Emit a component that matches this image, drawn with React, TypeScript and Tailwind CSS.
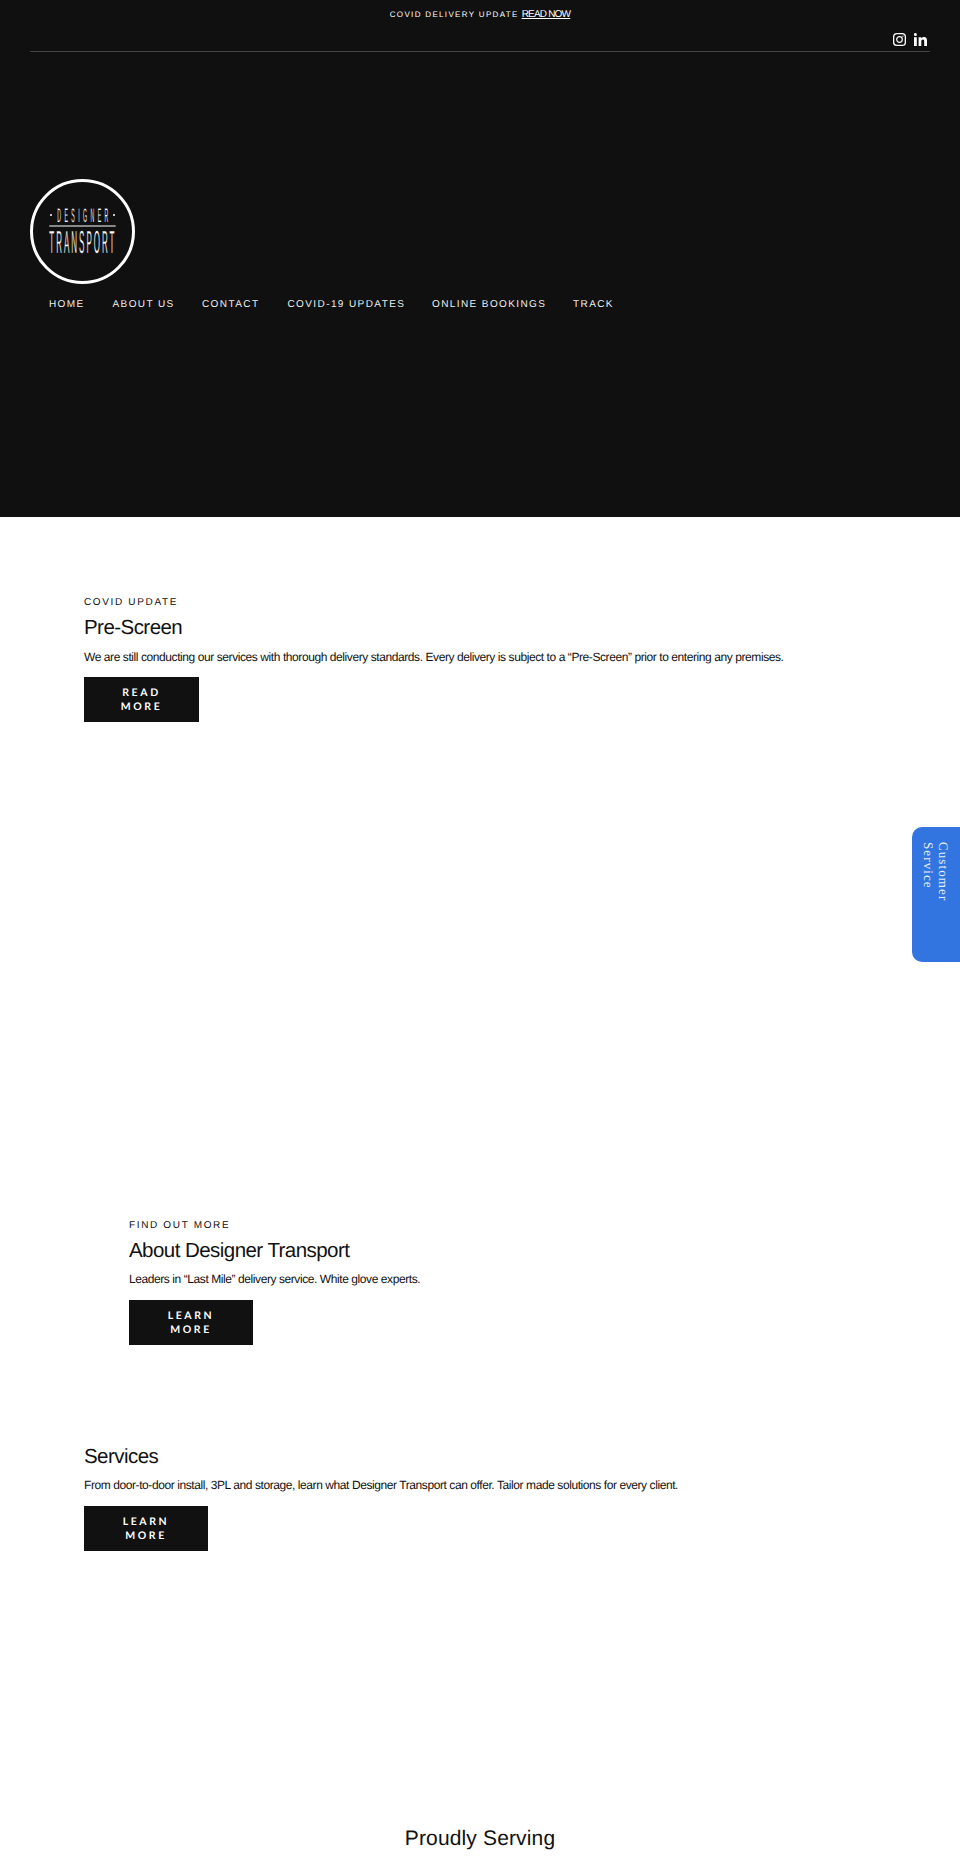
const sans = "font-['Liberation_Sans',Arial,sans-serif]"

const navItems = [
  { label: 'HOME', className: 'w-[63.5px]' },
  { label: 'ABOUT US', className: 'w-[89.5px]' },
  { label: 'CONTACT', className: 'w-[85.5px]' },
  { label: 'COVID-19 UPDATES', className: 'w-[144.5px]' },
  { label: 'ONLINE BOOKINGS', className: 'w-[141px]' },
  { label: 'TRACK', className: '' },
]

function Logo() {
  return (
    <svg width="105" height="105" viewBox="0 0 105 105" className="block">
      <circle cx="52.5" cy="52.5" r="51" fill="none" stroke="white" strokeWidth="3" />
      <circle cx="21" cy="36" r="1" fill="white" />
      <circle cx="84" cy="36" r="1" fill="white" />
      <text
        transform="translate(27.3 43) scale(0.264 1)"
        fill="white"
        stroke="#101010"
        strokeWidth="0.25"
        fontFamily="Liberation Sans, Arial, sans-serif"
        fontSize="19.5"
        letterSpacing="13"
      >
        DESIGNER
      </text>
      <rect x="19.3" y="46.5" width="66.4" height="1" fill="white" />
      <text
        transform="translate(19.3 74) scale(0.25 1)"
        fill="white"
        stroke="#101010"
        strokeWidth="0.4"
        fontFamily="Liberation Sans, Arial, sans-serif"
        fontSize="32"
        letterSpacing="8"
      >
        TRANSPORT
      </text>
    </svg>
  )
}

function InstagramIcon() {
  return (
    <svg width="13" height="13" viewBox="0 0 13 13" fill="none" stroke="white">
      <rect x="0.65" y="0.65" width="11.7" height="11.7" rx="3.2" strokeWidth="1.3" />
      <circle cx="6.5" cy="6.5" r="2.8" strokeWidth="1.2" />
      <circle cx="9.9" cy="3.1" r="0.7" fill="white" stroke="none" />
    </svg>
  )
}

function LinkedinIcon() {
  return (
    <svg width="13" height="13" viewBox="0 0 13 13" fill="white">
      <rect x="0" y="4.2" width="2.8" height="8.8" />
      <circle cx="1.4" cy="1.5" r="1.5" />
      <path d="M4.6 4.2h2.6v1.2c.5-.8 1.5-1.4 2.8-1.4 2.3 0 3 1.5 3 3.6V13h-2.8V8.2c0-1.1-.3-1.8-1.3-1.8-1.1 0-1.6.8-1.6 1.9V13H4.6z" />
    </svg>
  )
}

function DarkButton({ lines, className }: { lines: string[]; className: string }) {
  return (
    <a
      className={`flex h-[45px] flex-col items-center justify-center bg-[#111111] pt-[1px] font-['Lato',sans-serif] text-[10.5px] leading-[14px] font-bold tracking-[2.6px] text-white ${className}`}
    >
      {lines.map(line => (
        <span key={line}>{line}</span>
      ))}
    </a>
  )
}

function Eyebrow({ children }: { children: string }) {
  return <p className="h-[14px] text-[10px] leading-[16px] tracking-[1.65px] text-[#111111]">{children}</p>
}

function Heading({ children }: { children: string }) {
  return <h2 className="h-[36px] text-[20.5px] leading-[38px] tracking-[-0.55px] text-[#111111]">{children}</h2>
}

function Body({ children }: { children: string }) {
  return <p className="mt-[1.5px] h-[20px] text-[12px] leading-[21px] tracking-[-0.42px] text-[#111111]">{children}</p>
}

export default function App() {
  return (
    <div className={`relative h-[1875px] w-[960px] overflow-hidden bg-white [text-rendering:geometricPrecision] ${sans}`}>
      {/* Hero */}
      <header className="h-[517px] bg-[#101010] px-[30px] text-white">
        <div className="flex h-[28px] items-center justify-center gap-[3px] pt-[1px]">
          <span className="text-[8px] tracking-[1.33px]">COVID DELIVERY UPDATE</span>
          <a className="text-[10px] tracking-[-0.8px] underline">READ NOW</a>
        </div>
        <div className="flex h-[23.5px] items-center justify-end gap-[8px] border-b border-[#444444] pr-[3px]">
          <InstagramIcon />
          <LinkedinIcon />
        </div>

        <div className="mt-[127px]">
          <Logo />
        </div>

        {/* Nav */}
        <nav className="mt-[12.5px] flex h-[16px] items-center pt-[1px] pl-[19px] text-[10px] tracking-[1.4px] text-[#eeeeee]">
          {navItems.map(item => (
            <a key={item.label} className={`whitespace-nowrap ${item.className}`}>
              {item.label}
            </a>
          ))}
        </nav>
      </header>

      {/* Pre-screen */}
      <section className="pt-[78px] pl-[84px]">
        <Eyebrow>COVID UPDATE</Eyebrow>
        <Heading>Pre-Screen</Heading>
        <Body>We are still conducting our services with thorough delivery standards. Every delivery is subject to a “Pre-Screen” prior to entering any premises.</Body>
        <DarkButton lines={['READ', 'MORE']} className="mt-[10.5px] w-[115px]" />
      </section>

      {/* About */}
      <section className="pt-[495.5px] pl-[129px]">
        <Eyebrow>FIND OUT MORE</Eyebrow>
        <Heading>About Designer Transport</Heading>
        <Body>Leaders in “Last Mile” delivery service. White glove experts.</Body>
        <DarkButton lines={['LEARN', 'MORE']} className="mt-[10.5px] w-[124px]" />
      </section>

      {/* Services */}
      <section className="pt-[93px] pl-[84px]">
        <Heading>Services</Heading>
        <Body>From door-to-door install, 3PL and storage, learn what Designer Transport can offer. Tailor made solutions for every client.</Body>
        <DarkButton lines={['LEARN', 'MORE']} className="mt-[10.5px] w-[124px]" />
      </section>

      <h2 className="mt-[266.5px] h-[40px] text-center text-[21px] leading-[43px] tracking-[0.15px] text-[#111111]">Proudly Serving</h2>

      {/* Customer service tab */}
      <a className="absolute top-[827px] right-0 h-[135px] w-[48px] rounded-l-[10px] bg-[#3275e0] pt-[15px] pr-[9px] font-['Liberation_Serif',serif] text-[13px] leading-[15px] tracking-[1.1px] text-[#e8effb] [writing-mode:vertical-rl]">
        Customer
        <br />
        Service
      </a>
    </div>
  )
}
